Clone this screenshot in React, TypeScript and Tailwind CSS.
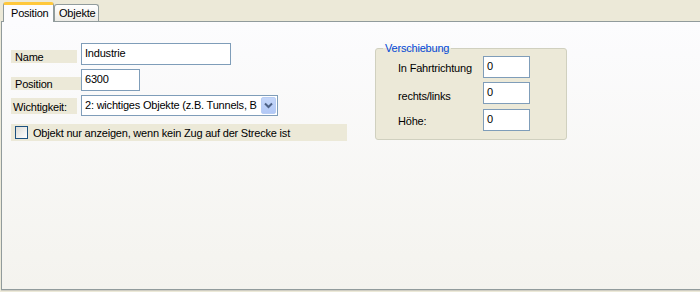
import { useState } from "react"

function Field({ value, width }: { value: string; width: string }) {
    return (
        <div className={`${width} h-[22px] shrink-0 border border-[#7f9db9] bg-white pl-[3px] pt-[2px] leading-[14px] text-black`}>
            {value}
        </div>
    )
}

export default function App() {
    const [checked, setChecked] = useState(false)

    const offsets = [
        { label: "In Fahrtrichtung", pad: "pt-[2px]" },
        { label: "rechts/links", pad: "pt-[6px]" },
        { label: "Höhe:", pad: "pt-[4px]" },
    ]

    return (
        <div className="w-[700px] h-[292px] overflow-hidden bg-[#ece9d8] font-['Tahoma','Liberation_Sans',sans-serif] text-[11px] tracking-[-0.2px] text-black">
            {/* Tabs */}
            <div className="flex items-end h-[21px] pl-[3px]">
                <div className="relative z-10 -mb-px h-[20px] w-[51px] rounded-t-[3px] border-x border-[#919b9c] bg-[#fcfcfe] border-t-[3px] border-t-[#ffc83c] pl-[7px] pt-[1px] leading-[14px]">
                    Position
                </div>
                <div className="h-[17px] w-[45px] rounded-t-[3px] border border-b-0 border-[#919b9c] bg-gradient-to-b from-white to-[#ecebe6] pl-[4px] pt-[2px] leading-[13px]">
                    Objekte
                </div>
            </div>

            {/* Panel */}
            <div className="ml-[1px] h-[269px] border-l border-y border-[#919b9c] bg-gradient-to-b from-[#fcfcfe] to-[#f4f3ee] shadow-[0_1px_0_#d0cec4]">
                <div className="flex pt-[21px]">
                    {/* Left form */}
                    <div className="flex w-[373px] shrink-0 flex-col pl-[9px]">
                        <div className="flex items-end h-[22px]">
                            <div className="mb-[2px] h-[13px] w-[66px] bg-[#ece9d8] pl-[4px] leading-[14px]">Name</div>
                            <div className="ml-[4px]"><Field value="Industrie" width="w-[150px]" /></div>
                        </div>
                        <div className="mt-[4px] flex items-end h-[22px]">
                            <div className="mb-[1px] h-[13px] w-[70px] bg-[#ece9d8] pl-[4px] leading-[14px]">Position</div>
                            <Field value="6300" width="w-[59px]" />
                        </div>
                        <div className="mt-[4px] flex items-center h-[21px]">
                            <div className="h-[16px] w-[66px] bg-[#ece9d8] pl-[2px] pt-[2px] leading-[14px]">Wichtigkeit:</div>
                            <div className="ml-[4px] flex h-[21px] w-[197px] items-center border border-[#7f9db9] bg-white pl-[3px]">
                                <span className="flex-1 overflow-hidden whitespace-nowrap">2: wichtiges Objekte (z.B. Tunnels, B</span>
                                <div className="mr-px flex h-[17px] w-[15px] shrink-0 items-center justify-center rounded-[2px] border border-[#b8cdf4] bg-gradient-to-b from-[#c4d6f9] to-[#b2c8f6]">
                                    <svg width="9" height="7" viewBox="0 0 9 7">
                                        <path d="M1 1.5 L4.5 5 L8 1.5" fill="none" stroke="#4d6185" strokeWidth="2" />
                                    </svg>
                                </div>
                            </div>
                        </div>
                        <div
                            className="mt-[8px] flex h-[17px] w-[336px] cursor-default items-center bg-[#ece9d8] pl-[4px]"
                            onClick={() => setChecked(!checked)}
                        >
                            <div className="flex h-[13px] w-[13px] items-center justify-center border border-[#1c5180] bg-gradient-to-br from-[#dcdcd7] to-white">
                                {checked && (
                                    <svg width="9" height="9" viewBox="0 0 9 9">
                                        <path d="M1 4 L3.5 6.5 L8 2" fill="none" stroke="#21a121" strokeWidth="2" />
                                    </svg>
                                )}
                            </div>
                            <span className="ml-[5px] leading-[14px]">Objekt nur anzeigen, wenn kein Zug auf der Strecke ist</span>
                        </div>
                    </div>

                    {/* Verschiebung group */}
                    <div className="relative mt-[5px] h-[92px] w-[192px] shrink-0 rounded-[3px] border border-[#d0d0bf] bg-[#ece9d8]">
                        <span className="absolute -top-[7px] left-[7px] bg-gradient-to-b from-[#fafaf8] from-50% to-[#ece9d8] to-50% px-[2px] leading-[12px] text-[#0046d5]">
                            Verschiebung
                        </span>
                        <div className="flex flex-col gap-[4px] pl-[22px] pt-[7px]">
                            {offsets.map((o) => (
                                <div key={o.label} className="flex items-center">
                                    <span className={`w-[85px] shrink-0 ${o.pad}`}>{o.label}</span>
                                    <Field value="0" width="w-[47px]" />
                                </div>
                            ))}
                        </div>
                    </div>
                </div>
            </div>
        </div>
    )
}
